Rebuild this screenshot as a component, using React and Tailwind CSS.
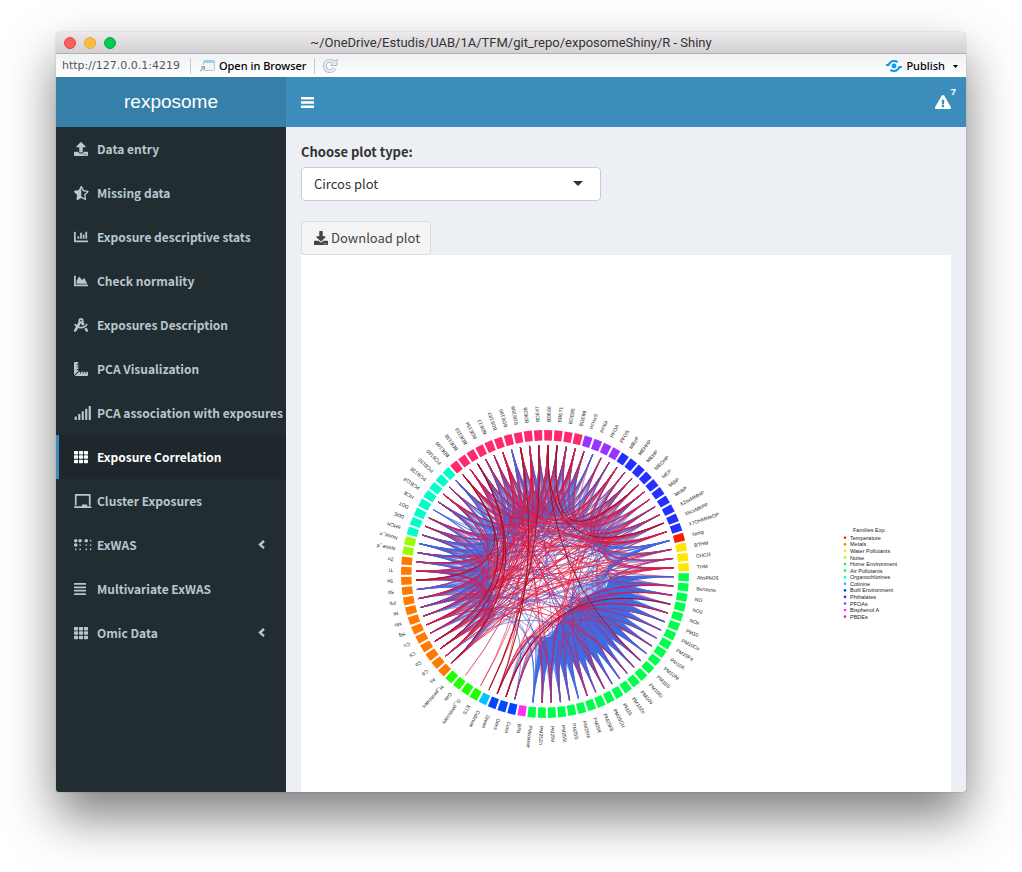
import React from "react";
import {
  FaUpload, FaStarHalfAlt, FaChartBar, FaChartArea, FaDraftingCompass, FaRulerCombined, FaSignal,
  FaTh, FaChalkboard, FaBraille, FaAlignJustify, FaDownload, FaExclamationTriangle,
} from "react-icons/fa";

const MENU = [
  { label: "Data entry", icon: FaUpload },
  { label: "Missing data", icon: FaStarHalfAlt, wide: true },
  { label: "Exposure descriptive stats", icon: FaChartBar },
  { label: "Check normality", icon: FaChartArea },
  { label: "Exposures Description", icon: FaDraftingCompass },
  { label: "PCA Visualization", icon: FaRulerCombined },
  { label: "PCA association with exposures", icon: FaSignal, wide: true },
  { label: "Exposure Correlation", icon: FaTh, active: true },
  { label: "Cluster Exposures", icon: FaChalkboard, wide: true },
  { label: "ExWAS", icon: FaBraille, wide: true, children: true },
  { label: "Multivariate ExWAS", icon: FaAlignJustify, narrow: true },
  { label: "Omic Data", icon: FaTh, children: true },
];

const LEGEND = [
  ["Temperature", "#ff1a00"],
  ["Metals", "#ff7800"],
  ["Water Pollutants", "#ffe600"],
  ["Noise", "#99ff00"],
  ["Home Environment", "#1fff00"],
  ["Air Pollutants", "#00ff4d"],
  ["Organochlorines", "#00ffc8"],
  ["Cotinine", "#00c3ff"],
  ["Built Environment", "#0047ff"],
  ["Phthalates", "#2430ff"],
  ["PFOAs", "#9933ff"],
  ["Bisphenol A", "#ff33ee"],
  ["PBDEs", "#ff2a6d"],
];

// Sectors in clockwise order, starting just right of twelve o'clock.
const FAMILIES = [
  ["pbde", "#ff2a6d", "BDE66 BDE71 BDE85 BDE99"],
  ["pfoa", "#9933ff", "PFHxS PFNA PFOA PFOS"],
  ["phth", "#2430ff", "MBzP MEHHP MEHP MEOHP MEP MiBP MnBP X2oxMMHP X5cxMEPP X7OHMMeOP"],
  ["temp", "#ff1a00", "Temp"],
  ["water", "#ffe600", "BTHM CHCl3 THM"],
  ["air", "#00ff4d", "AbsPM25 Benzene NO NO2 NOx PM10 PM10Cu PM10Fe PM10K PM10Ni PM10S PM10Si PM10V PM10Zn PM25 PM25CU PM25FE PM25K PM25Ni PM25S PM25Si PM25V PM25Zn PMcoarse"],
  ["bpa", "#ff33ee", "BPA"],
  ["built", "#0047ff", "Conn Dens Green"],
  ["cot", "#00c3ff", "Cotinine"],
  ["home", "#1fff00", "ETS G_pesticides Gas H_pesticides"],
  ["metal", "#ff7800", "As Cd Co Cs Cu Hg Mo Ni Pb Sb Se Tl Zn"],
  ["noise", "#99ff00", "Noise_d Noise_n"],
  ["oc", "#00ffc8", "bHCH DDE DDT HCB PCB118 PCB138 PCB153 PCB180"],
  ["pbde", "#ff2a6d", "BDE100 BDE138 BDE153 BDE154 BDE17 BDE183 BDE190 BDE209 BDE28 BDE47"],
];

const NODES = FAMILIES.flatMap(([family, color, names]) =>
  names.split(" ").map((name) => ({ family, color, name }))
);

const CX = 244;
const CY = 319;
const STEP = 360 / NODES.length;
const angleOf = (i) => 1.3 + i * STEP;
const pointAt = (deg, r) => {
  const a = ((deg - 90) * Math.PI) / 180;
  return [(CX + r * Math.cos(a)).toFixed(1), (CY + r * Math.sin(a)).toFixed(1)];
};

// Share of negative (blue) and positive (red) links between each pair of families.
const RATES = {
  "pbde-pbde": [0.42, 0.3],
  "pbde-pfoa": [0.5, 0.12],
  "pbde-phth": [0.12, 0.24],
  "pbde-temp": [0.2, 0.05],
  "pbde-water": [0.08, 0.14],
  "pbde-air": [0.015, 0.045],
  "pbde-metal": [0.1, 0.3],
  "pbde-oc": [0.38, 0.09],
  "pbde-noise": [0.4, 0.02],
  "pfoa-pfoa": [0.6, 0],
  "pfoa-phth": [0.34, 0.12],
  "pfoa-metal": [0.08, 0.03],
  "pfoa-oc": [0.12, 0.04],
  "phth-phth": [0.3, 0.28],
  "phth-temp": [0.4, 0.1],
  "phth-water": [0.4, 0.2],
  "phth-air": [0.06, 0.025],
  "phth-metal": [0.06, 0.18],
  "phth-noise": [0.06, 0.08],
  "phth-oc": [0.07, 0.08],
  "temp-air": [0.9, 0],
  "water-air": [0.1, 0.04],
  "water-metal": [0.03, 0.2],
  "air-air": [0.985, 0.015],
  "air-built": [0.08, 0.14],
  "air-metal": [0.03, 0.04],
  "air-noise": [0.08, 0.01],
  "air-oc": [0.03, 0.02],
  "metal-metal": [0.42, 0.26],
  "metal-noise": [0.7, 0.04],
  "metal-oc": [0.42, 0.07],
  "noise-oc": [0.7, 0.03],
  "oc-oc": [0.6, 0.05],
};

const indexOf = Object.fromEntries(NODES.map((n, i) => [n.name, i]));

const DARK = [
  ["BDE66", "X5cxMEPP"], ["BDE71", "MEOHP"], ["BDE66", "PM10S"],
  ["BDE100", "Se"], ["BDE153", "Co"], ["BDE100", "Cs"], ["BDE153", "As"], ["BDE209", "Green"],
  ["BDE47", "Cotinine"], ["Dens", "NO2"],
].map(([a, b]) => [indexOf[a], indexOf[b]]);

const EXTRA_RED = [
  ["Gas", "BDE47"], ["ETS", "BDE190"], ["ETS", "BDE66"], ["Cotinine", "BDE85"], ["Cotinine", "BDE28"],
  ["Green", "PM10"], ["Green", "Benzene"], ["Green", "NO"], ["Dens", "NOx"], ["Dens", "Benzene"],
  ["Green", "THM"], ["Dens", "THM"], ["Conn", "NO"], ["Green", "MEP"], ["Dens", "BDE99"],
  ["Green", "BDE154"], ["PM25Zn", "BDE183"], ["PM25V", "MEHP"],
].map(([a, b]) => [indexOf[a], indexOf[b]]);

const EXTRA_BLUE = [
  ["Conn", "Mo"], ["Conn", "PMcoarse"], ["Conn", "PM25S"], ["Conn", "PM10V"], ["Dens", "PMcoarse"],
  ["Dens", "PM25Zn"], ["PMcoarse", "Hg"], ["PMcoarse", "Pb"],
].map(([a, b]) => [indexOf[a], indexOf[b]]);

function buildLinks() {
  let seed = 20177;
  const random = () => {
    seed = (seed * 1664525 + 1013904223) % 4294967296;
    return seed / 4294967296;
  };
  const air = [];
  const blue = [...EXTRA_BLUE];
  const red = [...EXTRA_RED];
  NODES.forEach((a, i) => {
    for (let j = i + 1; j < NODES.length; j += 1) {
      const b = NODES[j];
      const rate = RATES[`${a.family}-${b.family}`] || RATES[`${b.family}-${a.family}`];
      const roll = random();
      if (!rate) continue;
      if (a.name === "HCB" || b.name === "HCB") {
        if (roll < 0.06) blue.push([i, j]);
      } else if (roll < rate[0]) (a.family === "air" && b.family === "air" ? air : blue).push([i, j]);
      else if (roll < rate[0] + rate[1]) red.push([i, j]);
    }
  });
  return { air, blue, red };
}

const toPath = (links) =>
  links
    .map(([i, j]) => `M${pointAt(angleOf(i), 129)}Q${CX} ${CY} ${pointAt(angleOf(j), 129)}`)
    .join("");

const { air, blue, red } = buildLinks();
const pick = (list, keep) => list.filter((_, k) => (k % 4 === 0) === keep);

const PATHS = [
  [toPath(air), "#4169e1", 1.4],
  [toPath(pick(blue, false)), "#4169e1", 0.6],
  [toPath(pick(red, false)), "#e0183f", 0.6],
  [toPath(pick(blue, true)), "#4169e1", 0.7],
  [toPath(pick(red, true)), "#e0183f", 0.8],
  [toPath(DARK), "#a5101c", 1],
];

function CircosPlot() {
  return (
    <svg
      viewBox="0 0 650 537"
      className="block w-full"
      role="img"
      aria-label="Circos plot"
      fontFamily="Liberation Sans, Arial, sans-serif"
      fill="#222"
    >
      {PATHS.map(([d, stroke, width]) => (
        <path key={stroke + width} d={d} fill="none" stroke={stroke} strokeWidth={width} />
      ))}
      {NODES.map((node, i) => {
        const deg = angleOf(i);
        const corners = [
          pointAt(deg - 1.62, 133.5),
          pointAt(deg - 1.62, 144),
          pointAt(deg + 1.62, 144),
          pointAt(deg + 1.62, 133.5),
        ];
        return (
          <g key={node.name}>
            <polygon points={corners.join(" ")} fill={node.color} />
            <text
              x={CX + 152}
              y={CY}
              dy="2"
              fontSize="5"
              transform={`rotate(${deg - 90} ${CX} ${CY})`}
            >
              {node.name}
            </text>
          </g>
        );
      })}
      <text x="552" y="277" fontSize="5.5">Families Exp.</text>
      {LEGEND.map(([name, color], i) => (
        <g key={name}>
          <circle cx="544" cy={282.7 + i * 6.58} r="1.3" fill={color} />
          <text x="549" y={284.8 + i * 6.58} fontSize="5.5">{name}</text>
        </g>
      ))}
    </svg>
  );
}

function MenuItem({ item }) {
  const Icon = item.icon;
  const size = item.wide ? "h-[14px] w-[18px]" : item.narrow ? "h-[14px] w-[12px]" : "h-[14px] w-[14px]";
  return (
    <li>
      <a
        href="#"
        className={
          "flex h-11 items-center gap-[3px] border-l-3 pl-[15px] whitespace-nowrap " +
          (item.active ? "border-[#3c8dbc] bg-[#1e282c] text-white" : "border-transparent text-[#b8c7ce]")
        }
      >
        <span className="flex w-5 shrink-0">
          <Icon className={size} preserveAspectRatio="xMinYMid meet" />
        </span>
        <span>{item.label}</span>
        {item.children && (
          <svg viewBox="0 0 8 10" className="mr-5 ml-auto h-[10px] w-2" fill="none" stroke="currentColor" strokeWidth="2.400">
            <path d="M6 1 2 4.600 6 8.200" />
          </svg>
        )}
      </a>
    </li>
  );
}

export default function App() {
  return (
    <div className="flex h-screen flex-col bg-white px-14 pt-8 pb-20">
      <div className="flex min-h-0 flex-1 flex-col overflow-hidden rounded-t-[5px] rounded-b-[3px] bg-[#ecf0f5] shadow-[0_0_1px_rgba(0,0,0,0.5),0_25px_50px_rgba(0,0,0,0.5)]">
        <div className="grid h-[22px] shrink-0 grid-cols-[1fr_auto_1fr] items-center border-b border-[#b3adb3] bg-linear-to-b from-[#ebe9eb] to-[#d3d0d3]">
          <div className="flex gap-2 pl-2">
            <button aria-label="Close" className="size-3 rounded-full border border-[#e2463f] bg-[#fc605c]" />
            <button aria-label="Minimize" className="size-3 rounded-full border border-[#e1a73e] bg-[#fdbc40]" />
            <button aria-label="Zoom" className="size-3 rounded-full border border-[#12ac28] bg-[#00ca56]" />
          </div>
          <div className="font-[Roboto,sans-serif] text-[13px] leading-5 text-[#333]">
            ~/OneDrive/Estudis/UAB/1A/TFM/git_repo/exposomeShiny/R - Shiny
          </div>
        </div>

        <div className="flex h-[23px] shrink-0 items-center bg-linear-to-b from-[#eff1f3] to-white pr-2 pl-[6px] font-['Noto_Sans',sans-serif] text-[11px] leading-4 text-black">
          <span className="font-['DejaVu_Sans',sans-serif] text-[#555]">http://127.0.0.1:4219</span>
          <span className="mr-2 ml-[10px] h-4 w-px bg-[#c8ccd0]" />
          <button className="flex items-center gap-1 font-medium">
            <svg viewBox="0 0 16 14" className="h-[14px] w-4" fill="none">
              <rect x="4.5" y="1.5" width="11" height="10" rx="1" fill="#edf5fa" stroke="#b4c4d4" />
              <path d="M5 3h10" stroke="#9fd0ea" strokeWidth="2" />
              <path d="M1.200 12 5 8.200M2.200 7.700h3.300v3.300" stroke="#fff" strokeWidth="3" />
              <path d="M1.200 12 5 8.200M2.200 7.700h3.300v3.300" stroke="#9aabbc" strokeWidth="1.4" />
            </svg>
            Open in Browser
          </button>
          <span className="mr-[7px] ml-2 h-4 w-px bg-[#c8ccd0]" />
          <button aria-label="Reload">
            <svg viewBox="0 0 16 16" className="size-4" fill="none">
              <path d="M12.6 10.2A5.2 5.2 0 1 1 11.8 4.4" stroke="#b5bfca" strokeWidth="4" />
              <path d="M15 1v6.5H8.5Z" fill="#e6ebf0" stroke="#b5bfca" />
              <path d="M12.6 10.2A5.2 5.2 0 1 1 11.8 4.4" stroke="#e6ebf0" strokeWidth="2.2" />
            </svg>
          </button>
          <button className="ml-auto flex items-center gap-1 font-medium">
            <svg viewBox="0 0 16 12" className="h-3 w-4" fill="none" stroke="#119bea" strokeWidth="2.200">
              <circle cx="8" cy="6" r="2.4" fill="#119bea" stroke="none" />
              <path d="M0 5h2.5C4 2.200 6 1 8 1c1.500 0 2.600.4 3.600 1.200" />
              <path d="M16 7h-2.500C12 9.800 10 11 8 11c-1.500 0-2.600-.4-3.600-1.200" />
            </svg>
            Publish
            <svg viewBox="0 0 5 3" className="mt-px ml-1 h-[3px] w-[5px]"><path d="M0 0h5L2.500 3Z" /></svg>
          </button>
        </div>

        <header className="flex h-[50px] shrink-0 bg-[#3c8dbc] text-white">
          <a href="#" className="flex w-[230px] items-center justify-center bg-[#367fa9] font-['Liberation_Sans',sans-serif] text-[19px] leading-6">
            rexposome
          </a>
          <button aria-label="Toggle navigation" className="px-[15px]">
            <svg viewBox="0 0 13 11" className="h-[11px] w-[13px]" fill="currentColor">
              <path d="M0 0h13v2.500H0zM0 4.200h13v2.500H0zM0 8.400h13v2.500H0z" />
            </svg>
          </button>
          <a href="#" aria-label="Notifications" className="relative ml-auto flex w-[46px] items-center justify-center">
            <FaExclamationTriangle className="size-4" />
            <span className="absolute top-[10px] right-[10px] font-['Noto_Sans',sans-serif] text-[9px] leading-[10px] font-bold">7</span>
          </a>
        </header>

        <div className="flex min-h-0 flex-1 overflow-hidden font-['Noto_Sans_CJK_SC',sans-serif] text-[13px] leading-5">
          <nav className="w-[230px] shrink-0 bg-[#222d32] text-xs font-bold">
            <ul>
              {MENU.map((item) => <MenuItem key={item.label} item={item} />)}
            </ul>
          </nav>
          <main className="flex min-w-0 flex-1 flex-col items-start px-[15px] pt-[15px] text-[#333]">
            <label htmlFor="plot-type" className="mb-[5px] font-bold">Choose plot type:</label>
            <div className="relative mb-5 w-[300px] max-w-full">
              <select id="plot-type" className="h-[34px] w-full appearance-none rounded-[4px] border border-[#ccc] bg-white px-3 text-[#333]">
                <option>Circos plot</option>
              </select>
              <svg viewBox="0 0 10 5" className="pointer-events-none absolute top-[14px] right-[18px] h-[5px] w-[10px] fill-[#333]">
                <path d="M0 0h10L5 5Z" />
              </svg>
            </div>
            <button className="flex h-[34px] shrink-0 items-center gap-[3px] rounded-[3px] border border-[#ddd] bg-[#f4f4f4] pr-[10px] pl-3 text-[#444]">
              <FaDownload className="size-[14px]" />
              Download plot
            </button>
            <div className="w-full flex-1 bg-white">
              <CircosPlot />
            </div>
          </main>
        </div>
      </div>
    </div>
  );
}
